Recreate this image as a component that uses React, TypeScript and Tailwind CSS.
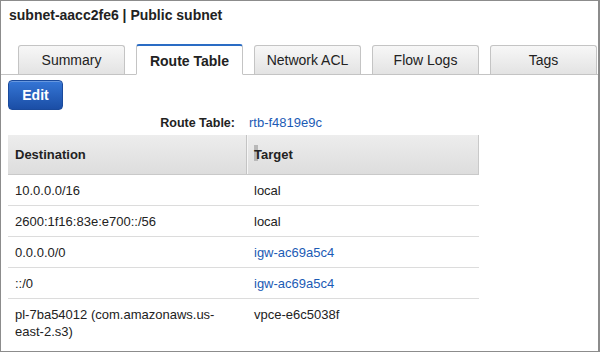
import React from "react";

const tabs = ["Summary", "Route Table", "Network ACL", "Flow Logs", "Tags"];

const rows: { dest: string; target: string; link?: boolean }[] = [
  { dest: "10.0.0.0/16", target: "local" },
  { dest: "2600:1f16:83e:e700::/56", target: "local" },
  { dest: "0.0.0.0/0", target: "igw-ac69a5c4", link: true },
  { dest: "::/0", target: "igw-ac69a5c4", link: true },
  { dest: "pl-7ba54012 (com.amazonaws.us-east-2.s3)", target: "vpce-e6c5038f" },
];

export default function App() {
  return (
    <div
      className="w-[602px] h-[353px] bg-white overflow-hidden text-[#222]"
      style={{ fontFamily: '"Liberation Sans", Arial, Helvetica, sans-serif' }}
    >
      <div className="w-[600px] h-[352px] border border-[#8c8c8c] border-r-2 overflow-hidden">
        <div className="pl-[8px] pt-[6px] h-[44px] text-[14px] font-bold leading-[17px] text-[#222]">
          subnet-aacc2fe6 | Public subnet
        </div>
        <div className="flex items-end gap-[11px] pl-[17px] h-[30px] border-b border-[#c4c4c4]">
          {tabs.map((t) =>
            t === "Route Table" ? (
              <div
                key={t}
                className="shrink-0 w-[107px] h-[31px] -mb-px bg-white border border-[#c4c4c4] border-t-2 border-t-[#2a6cc4] border-b-white rounded-t-[3px] flex items-center justify-center pt-[3px] text-[14px] font-bold text-[#222]"
              >
                {t}
              </div>
            ) : (
              <div
                key={t}
                className="shrink-0 w-[107px] h-[29px] bg-gradient-to-b from-[#f7f7f7] to-[#e3e3e3] border border-b-0 border-[#c4c4c4] rounded-t-[3px] flex items-center justify-center text-[14px] text-[#222]"
              >
                {t}
              </div>
            )
          )}
        </div>
        <div className="pl-[7px] pt-[5px]">
          <button className="w-[55px] h-[30px] rounded-[4px] bg-gradient-to-b from-[#3576d6] to-[#1b4ea6] border border-[#1a4a9c] text-white text-[14px] font-bold flex items-center justify-center shadow-[inset_0_1px_0_rgba(255,255,255,0.25)]">
            Edit
          </button>
        </div>
        <div className="flex items-center h-[22px] mt-[2px] text-[13px] leading-[16px]">
          <div className="w-[234px] text-right font-bold text-[12.5px] text-[#222]">Route Table:</div>
          <div className="ml-[14px] text-[#1b5bb5]">rtb-f4819e9c</div>
        </div>
        <div className="ml-[7px] mt-[1px] w-[471px] text-[13px]">
          <div className="flex h-[40px] bg-gradient-to-b from-[#ededed] to-[#dddddd] border-b border-[#c9c9c9] border-r border-r-[#c9c9c9] font-bold text-[#222]">
            <div className="w-[239px] pl-[7px] flex items-center border-r border-[#c4c4c4] shadow-[1px_0_0_#f6f6f6]">
              Destination
            </div>
            <div className="flex-1 pl-[7px] flex items-center">
              <span className="relative">
                <span className="absolute left-[0px] top-[0px] w-[4px] h-[16px] bg-[#b8b8b8]" />
                <span className="relative">Target</span>
              </span>
            </div>
          </div>
          {rows.map((r, i) => (
            <div
              key={i}
              className={`flex leading-[17px] ${i < rows.length - 1 ? "border-b border-[#dcdcdc]" : ""}`}
            >
              <div className="w-[239px] pl-[7px] pr-[8px] pt-[7px] pb-[6px]">{r.dest}</div>
              <div className={`flex-1 pl-[7px] pt-[7px] pb-[6px] ${r.link ? "text-[#1b5bb5]" : "text-[#222]"}`}>
                {r.target}
              </div>
            </div>
          ))}
        </div>
      </div>
    </div>
  );
}
